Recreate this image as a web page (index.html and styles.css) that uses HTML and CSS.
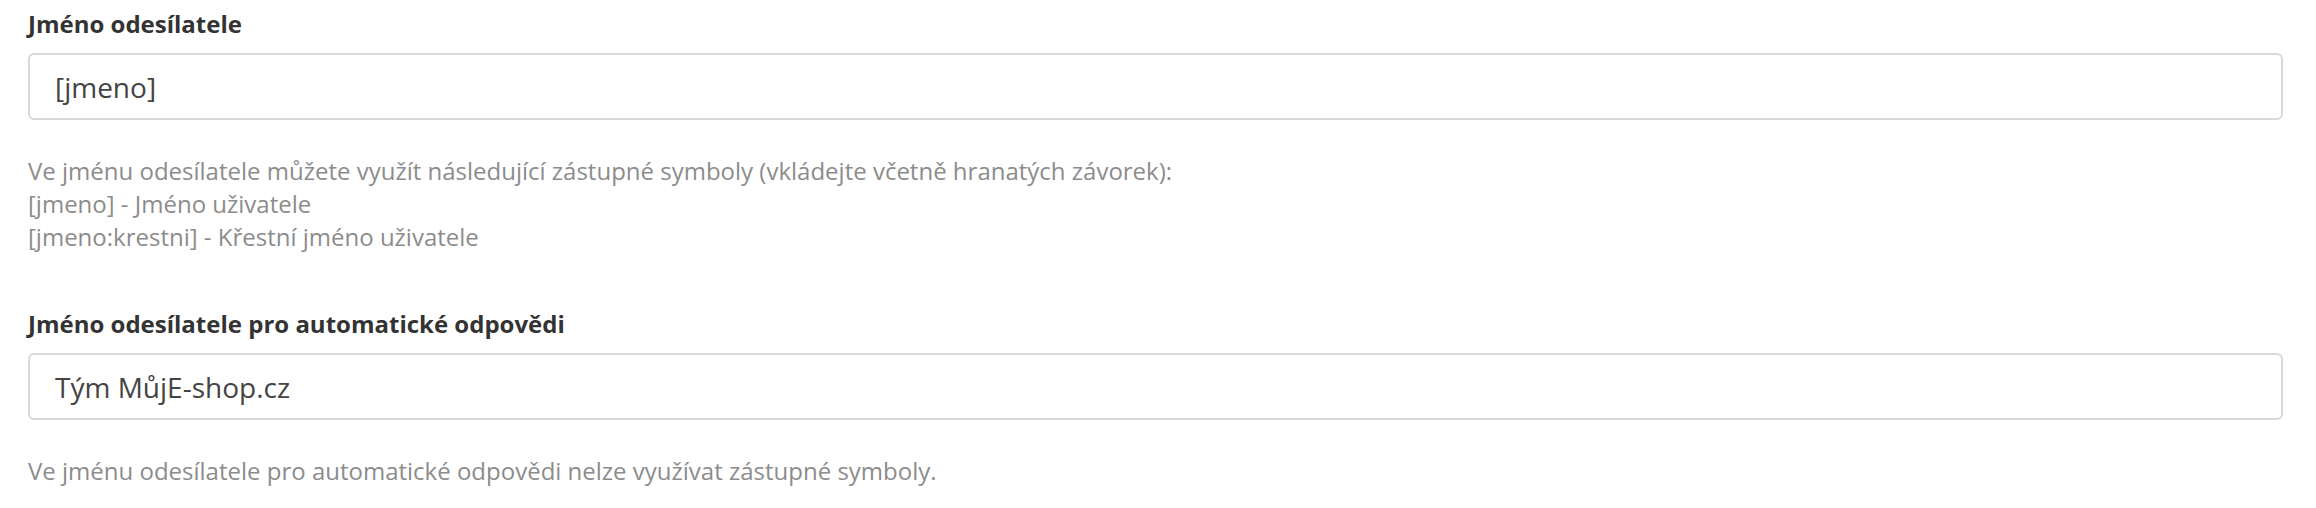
FILE: index.html
```html
<!DOCTYPE html>
<html lang="cs">
<head>
<meta charset="utf-8">
<title>Jméno odesílatele</title>
<link rel="stylesheet" href="styles.css">
</head>
<body>
<form class="form">
  <div class="field">
    <label class="field-label" for="sender">Jméno odesílatele</label>
    <input class="field-input" id="sender" type="text" value="[jmeno]">
    <div class="field-help">
      <div>Ve jménu odesílatele můžete využít následující zástupné symboly (vkládejte včetně hranatých závorek):</div>
      <div>[jmeno] - Jméno uživatele</div>
      <div>[jmeno:krestni] - Křestní jméno uživatele</div>
    </div>
  </div>
  <div class="field">
    <label class="field-label" for="sender-auto">Jméno odesílatele pro automatické odpovědi</label>
    <input class="field-input" id="sender-auto" type="text" value="Tým MůjE-shop.cz">
    <div class="field-help">
      <div>Ve jménu odesílatele pro automatické odpovědi nelze využívat zástupné symboly.</div>
    </div>
  </div>
</form>
</body>
</html>
```
FILE: styles.css
```css
html, body {
  margin: 0;
  padding: 0;
  background: #ffffff;
}
body {
  font-family: "Open Sans", "Liberation Sans", sans-serif;
  padding: 9px 33px 0 28px;
}
.form {
  display: flex;
  flex-direction: column;
  gap: 56px;
}
.field {
  display: flex;
  flex-direction: column;
}
.field-label {
  font-size: 24px;
  font-weight: 700;
  line-height: 30px;
  color: #333333;
  margin-bottom: 14px;
}
.field-input {
  box-sizing: border-box;
  width: 100%;
  height: 67px;
  margin: 0;
  padding: 0 25px;
  border: 2px solid #d9d9d9;
  border-radius: 6px;
  font-family: "Open Sans", "Liberation Sans", sans-serif;
  font-size: 28px;
  color: #444444;
  background: #ffffff;
  outline: none;
}
.field-help {
  margin-top: 34px;
  font-size: 24px;
  line-height: 33px;
  color: #8c8c8c;
}
```
